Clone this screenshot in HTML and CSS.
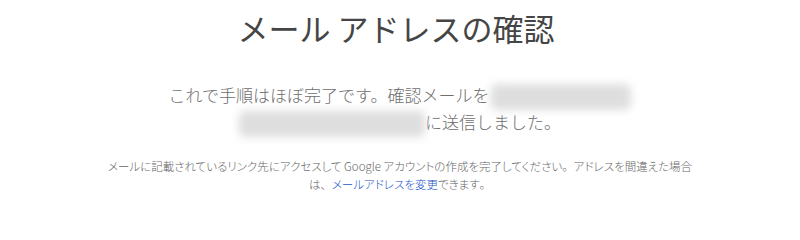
FILE: index.html
```html
<!DOCTYPE html>
<html lang="ja">
<head>
<meta charset="utf-8">
<title>メール アドレスの確認</title>
<link rel="stylesheet" href="styles.css">
</head>
<body>
<main class="page">
  <h1 class="title">メール アドレスの確認</h1>
  <p class="lead">これで手順はほぼ完了です。確認メールを<span class="redact redact-a"></span><span class="redact redact-b"></span>に送信しました。</p>
  <p class="note">メールに記載されているリンク先にアクセスして Google アカウントの作成を完了してください<span class="full">。</span>アドレスを間違えた場合<br>は<span class="full">、</span><a class="link" href="#">メールアドレスを変更</a>できます<span class="full">。</span></p>
</main>
</body>
</html>
```
FILE: styles.css
```css
html, body {
  margin: 0;
  padding: 0;
  background: #ffffff;
}
body {
  font-family: "Noto Sans CJK JP", "Noto Sans", sans-serif;
}
.page {
  display: flex;
  flex-direction: column;
  align-items: center;
  padding-top: 9px;
  text-align: center;
}
.title {
  margin: 0 8px 0 0;
  font-size: 31px;
  line-height: 37px;
  font-weight: 400;
  color: #454545;
}
.lead {
  margin: 37px 0 0;
  width: 480px;
  font-size: 17px;
  line-height: 24px;
  font-weight: 300;
  color: #6e6e6e;
}
.redact {
  display: inline-block;
  height: 26px;
  vertical-align: top;
  background: #dedede;
  filter: blur(4px);
  border-radius: 6px;
}
.redact-a {
  width: 140px;
  margin-left: 2px;
  margin-top: 1px;
}
.redact-b {
  width: 186px;
  margin-top: 1px;
}
.note {
  margin: 20px 0 0;
  font-size: 11.5px;
  line-height: 18px;
  font-weight: 300;
  color: #666666;
  font-feature-settings: "palt";
}
.full {
  font-feature-settings: normal;
}
.link {
  color: #1a55c8;
  text-decoration: none;
}
```
